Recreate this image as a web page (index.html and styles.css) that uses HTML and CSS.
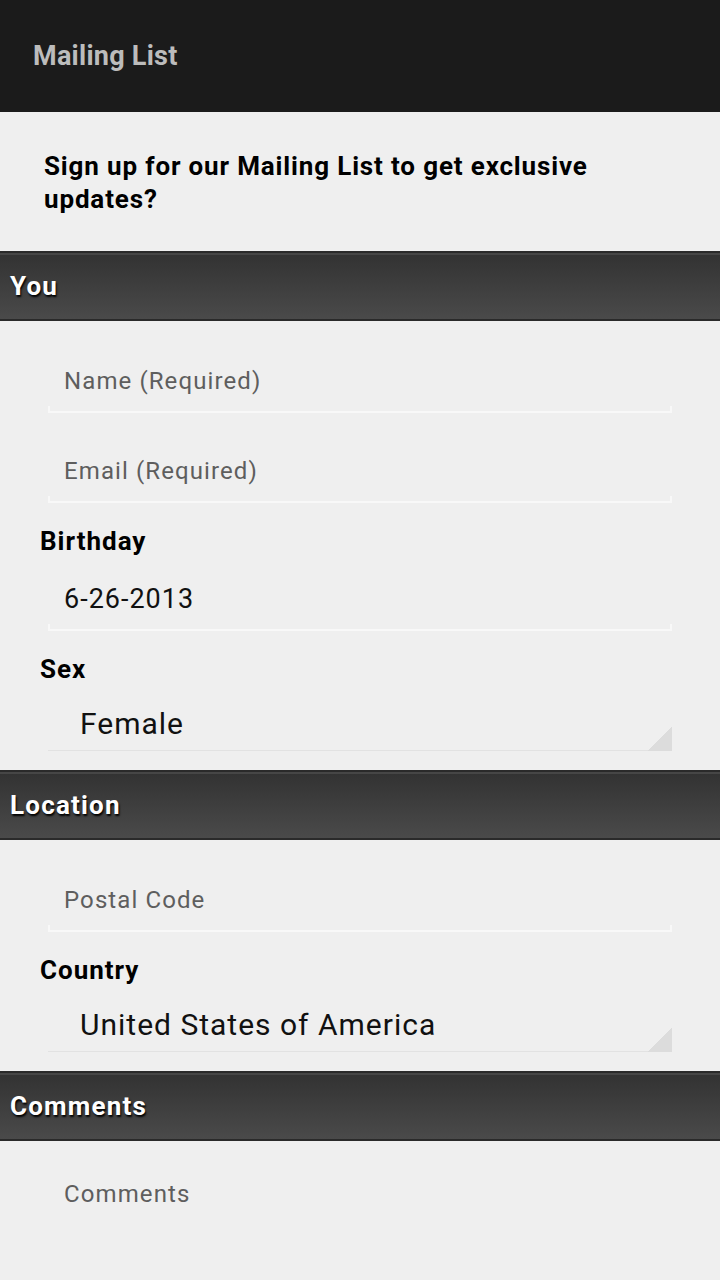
FILE: index.html
```html
<!DOCTYPE html>
<html lang="en">
<head>
<meta charset="utf-8">
<title>Mailing List</title>
<link rel="stylesheet" href="styles.css">
</head>
<body>
<div class="app">
  <header class="actionbar">
    <h1 class="actionbar-title">Mailing List</h1>
  </header>

  <p class="intro">Sign up for our Mailing List to get exclusive updates?</p>

  <section class="section">
    <h2 class="section-header">You</h2>
    <div class="section-body">
      <div class="field first">
        <div class="field-text placeholder">Name (Required)</div>
        <div class="field-line"></div>
      </div>
      <div class="field">
        <div class="field-text placeholder">Email (Required)</div>
        <div class="field-line"></div>
      </div>
      <div class="label">Birthday</div>
      <div class="field after-label">
        <div class="field-text value">6-26-2013</div>
        <div class="field-line"></div>
      </div>
      <div class="label">Sex</div>
      <div class="spinner">Female</div>
    </div>
  </section>

  <section class="section">
    <h2 class="section-header">Location</h2>
    <div class="section-body">
      <div class="field first">
        <div class="field-text placeholder">Postal Code</div>
        <div class="field-line"></div>
      </div>
      <div class="label">Country</div>
      <div class="spinner">United States of America</div>
    </div>
  </section>

  <section class="section">
    <h2 class="section-header">Comments</h2>
    <div class="section-body">
      <div class="field comments">
        <div class="field-text placeholder">Comments</div>
      </div>
    </div>
  </section>
</div>
</body>
</html>
```

FILE: styles.css
```css
* {
  box-sizing: border-box;
}

html, body {
  margin: 0;
  padding: 0;
}

body {
  background: #efefef;
  font-family: Roboto, "Noto Sans", "Liberation Sans", sans-serif;
  color: #000;
  width: 720px;
  min-height: 1280px;
  overflow: hidden;
}

.app {
  display: flex;
  flex-direction: column;
}

.actionbar {
  height: 112px;
  background: #1b1b1b;
  display: flex;
  align-items: center;
  padding-left: 33px;
}

.actionbar-title {
  margin: 0;
  font-size: 27px;
  font-weight: 700;
  color: #bcbcbc;
  line-height: 1;
  letter-spacing: 0.25px;
}

.intro {
  margin: 0;
  padding: 38px 44px 35px;
  font-size: 26px;
  font-weight: 700;
  line-height: 33px;
  letter-spacing: 0.85px;
  color: #000;
}

.section {
  display: flex;
  flex-direction: column;
}

.section-header {
  margin: 0;
  height: 70px;
  border-top: 2px solid #2a2a2a;
  border-bottom: 2px solid #2a2a2a;
  background: linear-gradient(#323232, #4a4a4a);
  box-shadow: inset 0 2px 0 #464646;
  padding-left: 10px;
  line-height: 67px;
  font-size: 26px;
  font-weight: 700;
  letter-spacing: 1.2px;
  color: #fff;
  text-shadow: 1px 2px 2px #000;
}

.section-body {
  display: flex;
  flex-direction: column;
  padding-bottom: 19px;
}

.field {
  margin: 27px 48px 0;
  display: flex;
  flex-direction: column;
}

.field.first {
  margin-top: 29px;
}

.field.after-label {
  margin-top: 9px;
}

.field-text {
  padding: 6px 0 0 16px;
  line-height: 50px;
  font-size: 24px;
  letter-spacing: 1.1px;
}

.placeholder {
  color: #5e5e5e;
}

.value {
  color: #111;
  font-size: 27px;
  letter-spacing: 1px;
}

.field-line {
  height: 7px;
  border-style: solid;
  border-color: #f8f8f8;
  border-width: 0 2px 2px;
}

.label {
  margin: 20px 40px 0;
  line-height: 36px;
  font-size: 26px;
  font-weight: 700;
  letter-spacing: 1px;
  color: #000;
}

.spinner {
  margin: 17px 48px 0;
  padding: 0 0 7px 32px;
  line-height: 40px;
  font-size: 30px;
  letter-spacing: 1px;
  color: #111;
  background:
    linear-gradient(to bottom right, transparent 50%, #dcdcdc 50%) right bottom / 24px 24px no-repeat,
    linear-gradient(#e2e2e2, #e2e2e2) left bottom / 100% 1px no-repeat;
}

.field.comments {
  margin-top: 22px;
  height: 120px;
}
```
